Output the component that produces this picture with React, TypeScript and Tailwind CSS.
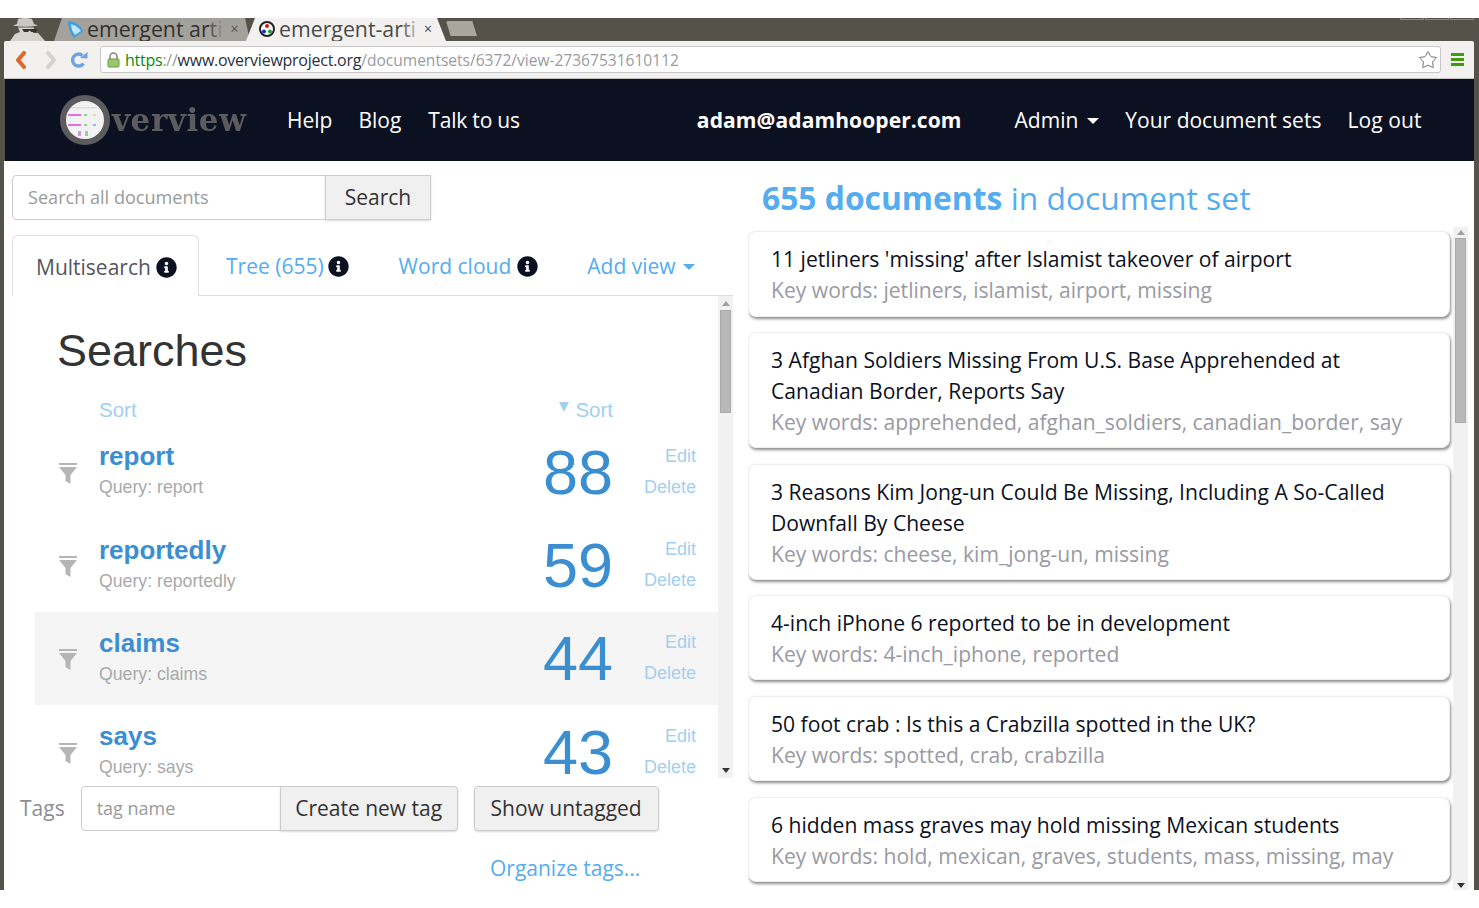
import React from "react";
import { FaInfoCircle } from "react-icons/fa";
import { Star } from "lucide-react";

const Caret = ({ className }: { className: string }) => (
  <span className={"inline-block w-0 h-0 border-x-[6px] border-x-transparent border-t-[6px] " + className} />
);

const Filter = () => (
  <svg width="20" height="22" viewBox="0 0 20 22" className="shrink-0">
    <rect x="1" y="0" width="18" height="2" fill="#b5b5b5" />
    <path d="M1 4h18l-6.5 8v9l-5 -3v-6z" fill="#b5b5b5" />
  </svg>
);

function Row({ name, count, hi }: { name: string; count: number; hi?: boolean }) {
  return (
    <div className={"flex items-center h-[93.4px] shrink-0 pl-[23px] pr-[22px] " + (hi ? "bg-[#f5f5f5]" : "")}>
      <div className="w-[41px] pt-[4px]"><Filter /></div>
      <div className="flex-1 min-w-0 pb-[2px]">
        <div className="text-[26px] leading-[32px] font-bold text-[#3b8fd1]">{name}</div>
        <div className="text-[17.7px] leading-[28px] mt-[1px] text-[#a9a9a9]">Query: {name}</div>
      </div>
      <div className="text-[63px] leading-[50px] text-[#3b8fd1] mr-[31px]">{count}</div>
      <div className="text-right text-[18px] text-[#a3cfef] leading-[31px]">
        <div>Edit</div>
        <div>Delete</div>
      </div>
    </div>
  );
}

function Card({ title, words, h }: { title: string[]; words: string; h: string }) {
  return (
    <div className={"shrink-0 w-[702px] bg-white rounded-[8px] border border-[#eeeeee] shadow-[1px_2px_3px_rgba(0,0,0,0.45)] pl-[22px] pr-[22px] pt-[11px] text-[21.1px] leading-[31px] " + h}>
      {title.map((t) => (
        <div key={t} className="text-[#0c1122] whitespace-nowrap">{t}</div>
      ))}
      <div className="text-[#9a9aa2] whitespace-nowrap">{words}</div>
    </div>
  );
}

export default function App() {
  return (
    <div className="w-[1479px] h-[908px] bg-white overflow-hidden flex flex-col font-['Open_Sans',sans-serif]">
      <div className="h-[18px] shrink-0 bg-white" />
      <div className="h-[872px] shrink-0 flex flex-col bg-[#55524a] pl-[4px] pr-[5px]">
        {/* tab strip */}
        <div className="h-[23px] shrink-0 flex items-end">
          <svg width="50" height="23" viewBox="0 0 50 23" className="shrink-0">
            <path d="M14 1Q21 -1 28 1L30 6L34 7.5Q21 10 9 7.5L13 6Z" fill="#c9c8c3" />
            <path d="M14 9.5H30L29 15L34 15L41 23H6L11 16L16 14Z" fill="#d3d2cd" />
            <path d="M18 11H33L32 14H27.5L25.5 12.5L24 14H20Z" fill="#33312c" />
          </svg>
          <div className="w-[196px] h-[23px] shrink-0 bg-[#a3a19b] [clip-path:polygon(0_100%,8px_0,calc(100%-5px)_0,100%_100%)] flex items-center pl-[13px] pb-[2px] whitespace-nowrap">
            <svg width="17" height="18" viewBox="0 0 17 18" className="shrink-0">
              <path d="M1 1Q12 2 16 11L7 18Q1 10 1 1Z" fill="#3a9fe0" />
              <path d="M4 4Q11 6 14 11L8 15Q4 10 4 4Z" fill="#bfe6fb" />
            </svg>
            <span className="ml-[3px] text-[21.3px] leading-none text-[#33312c]">emergent ar<span className="text-[#5f5d57]">t</span><span className="text-[#8a8881]">i</span></span>
            <span className="ml-[8px] text-[14px] text-[#55524a]">×</span>
          </div>
          <div className="w-[200px] h-[23px] shrink-0 -ml-[4px] bg-[#f2f1f0] [clip-path:polygon(0_100%,9px_0,calc(100%-9px)_0,100%_100%)] flex items-center pl-[13px] pb-[2px] whitespace-nowrap">
            <svg width="16" height="16" viewBox="0 0 16 16" className="shrink-0">
              <circle cx="8" cy="8" r="7" fill="#fff" stroke="#222" strokeWidth="2" />
              <circle cx="8" cy="5" r="2" fill="#e01010" />
              <circle cx="5" cy="10.5" r="2" fill="#1530d0" />
              <circle cx="11" cy="10.5" r="2" fill="#20a040" />
            </svg>
            <span className="ml-[4px] text-[21.3px] leading-none text-[#4a4a48]">emergent-ar<span className="text-[#77777a]">t</span><span className="text-[#aaa]">i</span></span>
            <span className="ml-[8px] text-[14px] text-[#444]">×</span>
          </div>
          <div className="w-[31px] h-[15px] mb-[5px] shrink-0 bg-[#a8a69f] rounded-t-[2px] [clip-path:polygon(0_0,85%_0,100%_100%,15%_100%)]" />
          <div className="flex-1 self-start flex justify-end gap-[1px]">
            <div className="w-[24px] h-[2px] border-x border-b border-[#8b8880] rounded-b-[1px]" />
            <div className="w-[24px] h-[2px] border-x border-b border-[#8b8880] rounded-b-[1px]" />
            <div className="w-[24px] h-[2px] border-x border-b border-[#8b8880] rounded-b-[1px]" />
          </div>
        </div>
        {/* toolbar */}
        <div className="h-[38px] shrink-0 bg-[#f2f1f0] border-b border-[#c4c4c4] rounded-t-[2px] flex items-center">
          <svg width="14" height="18" viewBox="0 0 14 18" className="ml-[10px] shrink-0">
            <path d="M10 2L4 9l6 7" fill="none" stroke="#e0662b" strokeWidth="4" strokeLinecap="round" strokeLinejoin="round" />
          </svg>
          <svg width="14" height="18" viewBox="0 0 14 18" className="ml-[16px] shrink-0">
            <path d="M4 2l6 7-6 7" fill="none" stroke="#d2d2d0" strokeWidth="4" strokeLinecap="round" strokeLinejoin="round" />
          </svg>
          <svg width="18" height="18" viewBox="0 0 18 18" className="ml-[12px] shrink-0">
            <path d="M13.5 12.5A6 6 0 1 1 12.5 4.5" fill="none" stroke="#6fa5dc" strokeWidth="3.4" />
            <path d="M10 7l7.5 .5V1z" fill="#6fa5dc" />
          </svg>
          <div className="ml-[12px] w-[1341px] h-[27px] bg-white border border-[#c8c8c8] rounded-[3px] flex items-center pl-[6px] pr-[2px] text-[16px] leading-[22px] tracking-[-0.25px] whitespace-nowrap shrink-0">
            <svg width="13" height="16" viewBox="0 0 13 16" className="shrink-0">
              <path d="M3 7V4.5a3.5 3.5 0 0 1 7 0V7" fill="none" stroke="#8a8a8a" strokeWidth="1.6" />
              <rect x="1" y="7" width="11" height="8" rx="1" fill="#9ac76b" stroke="#6c9a45" />
            </svg>
            <span className="ml-[5px] text-[#0a8a0a]">https</span>
            <span className="text-[#9a9aa0]">://</span>
            <span className="text-[#2b3040]">www.overviewproject.org</span>
            <span className="text-[#9a9aa0] tracking-[0px] text-[15.55px]">/documentsets/6372/view-27367531610112</span>
            <span className="flex-1" />
            <Star size={20} strokeWidth={1} className="text-[#555] shrink-0" />
          </div>
          <div className="ml-[10px] w-[13px] flex flex-col gap-[2px] shrink-0">
            <div className="h-[3px] bg-[#3f9b0b]" />
            <div className="h-[3px] bg-[#3f9b0b]" />
            <div className="h-[3px] bg-[#3f9b0b]" />
          </div>
        </div>
        {/* nav */}
        <div className="h-[82px] shrink-0 ml-[1px] pt-[2px] bg-[#0c1122] flex items-center text-white text-[21px] whitespace-nowrap">
          <div className="ml-[54px] -mt-[2px] w-[228px] flex items-center">
            <svg width="52" height="52" viewBox="0 0 52 52" className="shrink-0 -mr-[1px] blur-[0.5px]">
              <circle cx="26" cy="26" r="22" fill="#f2f2f2" stroke="#5c5c5e" strokeWidth="6" />
              <rect x="9" y="20" width="13" height="2" fill="#e070e0" />
              <rect x="9" y="30" width="13" height="2" fill="#e070e0" />
              <rect x="12" y="13" width="26" height="1.5" fill="#ddd" />
              <rect x="25" y="20" width="3" height="2" fill="#90d090" />
              <rect x="34" y="20" width="3" height="2" fill="#eedd80" />
              <rect x="25" y="30" width="3" height="2" fill="#90d090" />
              <rect x="34" y="30" width="3" height="2" fill="#88bbee" />
              <rect x="19" y="37" width="3" height="5" fill="#cc99dd" />
              <rect x="26" y="37" width="3" height="5" fill="#99cc99" />
            </svg>
            <span className="ml-[2px] font-['DejaVu_Serif',serif] font-bold text-[#5c5c5e] text-[31px] tracking-[0.6px] blur-[0.5px]">verview</span>
          </div>
          <span>Help</span>
          <span className="ml-[26px]">Blog</span>
          <span className="ml-[27px] tracking-[-0.2px]">Talk to us</span>
          <span className="ml-[177px] font-bold tracking-[0.1px]">adam@adamhooper.com</span>
          <span className="ml-[53px]">Admin</span>
          <Caret className="ml-[9px] border-t-white" />
          <span className="ml-[26px]">Your document sets</span>
          <span className="ml-[26px] tracking-[0.1px]">Log out</span>
        </div>
        {/* page */}
        <div className="flex-1 min-h-0 bg-white flex overflow-hidden">
          {/* left */}
          <div className="w-[729px] shrink-0 pl-[8px] pt-[14px] flex flex-col">
            <div className="flex h-[45px] shrink-0 w-[419px]">
              <div className="flex-1 border border-[#cccccc] rounded-l-[4px] flex items-center pl-[15px] text-[18.1px] text-[#9a9a9a]">Search all documents</div>
              <div className="w-[106px] -ml-[1px] border border-[#cccccc] bg-[#f0f0f0] shadow-[0_1px_2px_rgba(0,0,0,0.15)] flex items-center justify-center text-[#333] text-[21px]">Search</div>
            </div>
            <div className="mt-[15px] h-[61px] shrink-0 flex items-center border-b border-[#dddddd] text-[21px] text-[#55acee] whitespace-nowrap">
              <div className="h-[61px] w-[187px] -mb-[1px] pt-[3px] border border-b-0 border-[#dddddd] rounded-t-[6px] bg-white flex items-center pl-[23px] text-[#555560]">
                Multisearch
                <FaInfoCircle size={21} className="ml-[5px] text-[#0c1122]" />
              </div>
              <span className="ml-[27px] pt-[3px]">Tree (655)</span>
              <FaInfoCircle size={21} className="ml-[4px] mt-[3px] text-[#0c1122]" />
              <span className="ml-[50px] pt-[3px]">Word cloud</span>
              <FaInfoCircle size={21} className="ml-[6px] mt-[3px] text-[#0c1122]" />
              <span className="ml-[49px] pt-[3px]">Add view</span>
              <Caret className="ml-[7px] mt-[3px] border-t-[#55acee]" />
            </div>
            <div className="flex h-[482px] shrink-0 font-['Liberation_Sans',sans-serif]">
              <div className="flex-1 min-w-0 pl-[23px] overflow-hidden flex flex-col">
                <div className="pl-[22px] pt-[28px] h-[92px] shrink-0 text-[45px] leading-[54px] text-[#333333]">Searches</div>
                <div className="h-[44px] shrink-0 flex items-center pl-[64px] pr-[105px] text-[20.5px] text-[#a3cfef] justify-between">
                  <span>Sort</span>
                  <span className="flex items-center"><span className="w-0 h-0 mr-[6px] -mt-[7px] border-x-[5.5px] border-x-transparent border-t-[10px] border-t-[#a3cfef]" />Sort</span>
                </div>
                <div className="-mt-[7px] flex flex-col">
                  <Row name="report" count={88} />
                  <Row name="reportedly" count={59} />
                  <Row name="claims" count={44} hi />
                  <Row name="says" count={43} />
                </div>
              </div>
              <div className="w-[15px] shrink-0 bg-[#f1f1f1] flex flex-col items-center">
                <div className="h-0 w-0 mt-[5px] border-x-[4px] border-x-transparent border-b-[5px] border-b-[#a0a0a0]" />
                <div className="w-[11px] h-[103px] mt-[4px] bg-[#b8b8b8] border border-[#aaaaaa]" />
                <div className="flex-1" />
                <div className="h-0 w-0 mb-[5px] border-x-[4px] border-x-transparent border-t-[5px] border-t-[#333]" />
              </div>
            </div>
            <div className="mt-[8px] flex items-center h-[45px] shrink-0 pl-[8px] text-[21px] text-[#333] whitespace-nowrap">
              <span className="text-[#8e8e92]">Tags</span>
              <div className="ml-[16px] w-[200px] h-[45px] border border-[#cccccc] rounded-l-[4px] flex items-center pl-[15px] text-[18px] text-[#9a9a9a]">tag name</div>
              <div className="w-[178px] h-[45px] -ml-[1px] border border-[#cccccc] rounded-r-[4px] bg-[#f0f0f0] shadow-[0_1px_2px_rgba(0,0,0,0.15)] flex items-center justify-center">Create new tag</div>
              <div className="ml-[16px] w-[185px] h-[45px] border border-[#cccccc] rounded-[4px] bg-[#f0f0f0] shadow-[0_1px_2px_rgba(0,0,0,0.15)] flex items-center justify-center">Show untagged</div>
            </div>
            <div className="mt-[22px] pl-[478px] text-[21px] text-[#55acee] whitespace-nowrap">Organize tags...</div>
          </div>
          {/* right */}
          <div className="flex-1 min-w-0 pl-[15px] flex flex-col">
            <div className="h-[66px] shrink-0 pl-[14px] pt-[15px] text-[31.8px] leading-[44px] text-[#55acee] whitespace-nowrap">
              <span className="font-bold">655 documents</span> in document set
            </div>
            <div className="flex flex-1 min-h-0">
              <div className="flex flex-col w-[705px] shrink-0 pt-[4px] overflow-hidden">
                <Card h="h-[86px] mb-[15px]" title={["11 jetliners 'missing' after Islamist takeover of airport"]} words="Key words: jetliners, islamist, airport, missing" />
                <Card h="h-[116px] mb-[16px]" title={["3 Afghan Soldiers Missing From U.S. Base Apprehended at", "Canadian Border, Reports Say"]} words="Key words: apprehended, afghan_soldiers, canadian_border, say" />
                <Card h="h-[116px] mb-[15px]" title={["3 Reasons Kim Jong-un Could Be Missing, Including A So-Called", "Downfall By Cheese"]} words="Key words: cheese, kim_jong-un, missing" />
                <Card h="h-[85px] mb-[16px]" title={["4-inch iPhone 6 reported to be in development"]} words="Key words: 4-inch_iphone, reported" />
                <Card h="h-[85px] mb-[16px]" title={["50 foot crab : Is this a Crabzilla spotted in the UK?"]} words="Key words: spotted, crab, crabzilla" />
                <Card h="h-[85px]" title={["6 hidden mass graves may hold missing Mexican students"]} words="Key words: hold, mexican, graves, students, mass, missing, may" />
              </div>
              <div className="w-[15px] shrink-0 bg-[#f1f1f1] flex flex-col items-center">
                <div className="h-0 w-0 mt-[3px] border-x-[4px] border-x-transparent border-b-[5px] border-b-[#a0a0a0]" />
                <div className="w-[11px] h-[185px] mt-[3px] bg-[#b8b8b8] border border-[#aaaaaa]" />
                <div className="flex-1" />
                <div className="h-0 w-0 mb-[2px] border-x-[4px] border-x-transparent border-t-[5px] border-t-[#333]" />
              </div>
            </div>
          </div>
        </div>
      </div>
      <div className="flex-1 bg-white" />
    </div>
  );
}
